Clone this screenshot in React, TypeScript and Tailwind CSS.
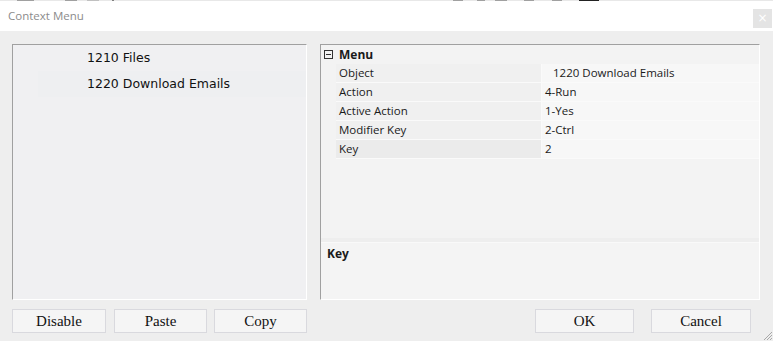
import React from "react";

const seg = "font-['Open_Sans','Noto_Sans',sans-serif]";

function Row({ label, value, selected, indent }: { label: string; value: string; selected?: boolean; indent?: boolean }) {
  return (
    <div className="flex h-[19px] border-b border-[#fafafa]">
      <div className={`w-[206px] flex items-center pl-[3px] ${selected ? "bg-[#ebebeb]" : "bg-[#f0f0f0]"} border-r border-[#fafafa]`}>
        {label}
      </div>
      <div className={`flex-1 flex items-center bg-[#f7f7f7] ${indent ? "pl-[11px]" : "pl-[3px]"}`}>{value}</div>
    </div>
  );
}

function Btn({ children, w }: { children: React.ReactNode; w: string }) {
  return (
    <div
      className={`${w} h-[24px] flex items-center justify-center bg-[#f5f5f5] border border-[#d9d9de] text-[15px] text-[#111] font-['Liberation_Serif',serif]`}
    >
      {children}
    </div>
  );
}

export default function App() {
  return (
    <div className="w-[773px] h-[341px] bg-[#eeeeee] flex flex-col overflow-hidden relative">
      <div className="h-[1px] bg-[#e8e8e8] flex">
        <div className="w-[17px] ml-[17px] bg-[#a0a0a0]" />
        <div className="w-[12px] ml-[31px] bg-[#a0a0a0]" />
        <div className="w-[12px] ml-[10px] bg-[#c0c0c0]" />
        <div className="w-[2px] ml-[13px] bg-[#808080]" />
        <div className="w-[10px] ml-[339px] bg-[#a0a0a0]" />
        <div className="w-[8px] ml-[14px] bg-[#a0a0a0]" />
        <div className="w-[12px] ml-[10px] bg-[#a0a0a0]" />
        <div className="w-[10px] ml-[17px] bg-[#a0a0a0]" />
        <div className="w-[10px] ml-[18px] bg-[#a0a0a0]" />
        <div className="w-[20px] ml-[17px] bg-[#222]" />
      </div>
      <div className="h-[30px] bg-white flex items-center justify-between pl-[8px] pr-[1px]">
        <span className={`${seg} text-[11.5px] text-[#8c8c8c]`}>Context Menu</span>
        <div className="w-[19px] h-[19px] mt-[4px] bg-[#e4e4e4] flex items-center justify-center text-white text-[12px] leading-none font-['DejaVu_Sans',sans-serif]">
          ×
        </div>
      </div>
      <div className="flex-1 flex flex-col px-[12px] pt-[13px]">
        <div className="flex gap-[13px] h-[256px]">
          <div className="w-[295px] border-l border-t border-[#a0a0a0] border-r border-b border-r-white border-b-white bg-[#f0f0f2] flex flex-col text-[12.5px] text-[#111] font-['DejaVu_Sans',sans-serif]">
            <div className="h-[26px] flex items-center pl-[74px]">1210 Files</div>
            <div className="h-[26px] flex items-center pl-[49px] ml-[25px] bg-[#eeeff1]">1220 Download Emails</div>
          </div>
          <div className={`w-[440px] border-l border-t border-[#a0a0a0] border-r border-b border-r-white border-b-white bg-[#f3f3f3] flex flex-col ${seg} text-[11.5px] text-[#1a1a1a]`}>
            <div className="h-[193px] flex flex-col">
              <div className="h-[19px] flex items-center">
                <div className="w-[15px] flex justify-center">
                  <div className="w-[9px] h-[9px] border border-[#333] flex items-center justify-center">
                    <div className="w-[5px] h-[1px] bg-[#333]" />
                  </div>
                </div>
                <span className="font-bold pl-[3px] text-[12px]">Menu</span>
              </div>
              <div className="pl-[15px] flex flex-col">
                <Row label="Object" value="1220 Download Emails" indent />
                <Row label="Action" value="4-Run" />
                <Row label="Active Action" value="1-Yes" />
                <Row label="Modifier Key" value="2-Ctrl" />
                <Row label="Key" value="2" selected />
              </div>
            </div>
            <div className="h-[4px] bg-[#eeeeee]" />
            <div className="flex-1 bg-[#f4f4f4] border-t border-[#f9f9f9] pl-[6px] pt-[2px]">
              <span className="font-bold text-[12px]">Key</span>
            </div>
          </div>
        </div>
        <div className="flex mt-[9px] items-start">
          <Btn w="w-[94px]">Disable</Btn>
          <div className="w-[8px]" />
          <Btn w="w-[93px]">Paste</Btn>
          <div className="w-[7px]" />
          <Btn w="w-[93px]">Copy</Btn>
          <div className="w-[228px]" />
          <Btn w="w-[99px]">OK</Btn>
          <div className="w-[17px]" />
          <Btn w="w-[100px]">Cancel</Btn>
        </div>
      </div>
      <svg className="absolute right-0 bottom-0" width="11" height="11" viewBox="0 0 11 11">
        <path d="M10 2 L2 10 M10 5 L5 10 M10 8 L8 10" stroke="#a8a8a8" strokeWidth="1" />
      </svg>
    </div>
  );
}
